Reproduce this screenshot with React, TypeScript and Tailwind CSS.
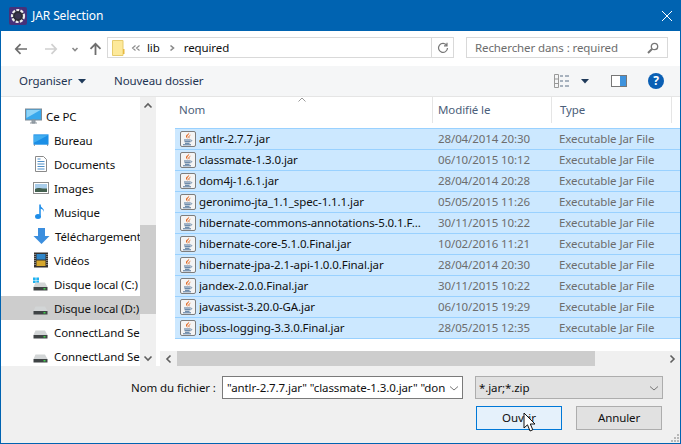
import React from "react";

const Java = () => (
  <svg width="18" height="18" viewBox="0 0 18 18" className="shrink-0">
    <rect x="1.500" y="1.500" width="15" height="15" rx="1.500" fill="#f4f4f4" stroke="#7d7d7d" />
    <path d="M10 2.500c1 2-2.600 3-1.600 5.200.2.500.5.8.8 1.100C7.400 8 6.500 6.800 7.200 5.500 7.800 4.500 9.800 4 10 2.500z" fill="#e0651f" />
    <path d="M11.300 5.200c-1.200.8-2 1.500-1.100 3" fill="none" stroke="#e0651f" strokeWidth="1" />
    <path d="M5 10h6.500M5.500 11.700h5.500M6 13.300h4.500M4 14.800h8" stroke="#4f7399" strokeWidth="1" fill="none" />
    <path d="M11.500 10c1.500-.3 1.800 1.400-.3 1.800" stroke="#4f7399" strokeWidth=".8" fill="none" />
  </svg>
);

const Drive = ({ win }: { win?: boolean }) => (
  <svg width="16" height="16" viewBox="0 0 16 16" className="shrink-0">
    {win && <path d="M0 1.500h2.700v2.500H0zM3.300 1.500H6v2.500H3.300zM0 4.500h2.700V7H0zM3.300 4.500H6V7H3.300z" fill="#1fb2f0" />}
    <path d="M2.500 6.500h9.500l2.500 4.500H0.500z" fill="#d2d5d6" />
    <rect x="0.500" y="11" width="14" height="3.500" fill="#3f4345" />
    <rect x="10.500" y="12" width="2" height="1.500" fill="#3fd04a" />
  </svg>
);

const Pc = () => (
  <svg width="17" height="16" viewBox="0 0 17 16" className="shrink-0">
    <rect x="0.500" y="1" width="16" height="11" fill="#38a8ec" stroke="#7f8a94" />
    <path d="M1.500 2h14l-14 8z" fill="#8fd4f7" />
    <path d="M5 15h7M7 12h3v3H7z" fill="#9aa4ad" stroke="#8a949c" />
  </svg>
);

const Desk = () => (
  <svg width="16" height="16" viewBox="0 0 17 16" className="shrink-0">
    <rect x="0.500" y="2" width="16" height="11" fill="#1c8fe6" />
    <path d="M1 3h15l-15 8z" fill="#42aef0" />
    <path d="M1 13.500h1M15 13.500h1" stroke="#555" />
  </svg>
);

const Doc = () => (
  <svg width="16" height="16" viewBox="0 0 16 16" className="shrink-0">
    <path d="M2.500 .5h8l3 3v12h-11z" fill="#fff" stroke="#8a8a8a" />
    <path d="M4.500 3h3M4.500 5.500h7M4.500 8h7M4.500 10.500h7M4.500 13h7" stroke="#4f8fc8" />
  </svg>
);

const Pic = () => (
  <svg width="16" height="16" viewBox="0 0 16 16" className="shrink-0">
    <rect x=".5" y="2.500" width="15" height="11" fill="#fff" stroke="#8e8e8e" />
    <rect x="2" y="4" width="12" height="8" fill="#a9cdea" />
    <path d="M2 9c3-2 6 0 12-.500V12H2z" fill="#43604f" />
  </svg>
);

const Music = () => (
  <svg width="16" height="16" viewBox="0 0 16 16" className="shrink-0">
    <path d="M7 .5v11" stroke="#1e8de8" strokeWidth="1.500" />
    <ellipse cx="5" cy="12.500" rx="3" ry="2.500" fill="#1e8de8" />
    <path d="M7 .5c.500 3 4.500 3.500 4 7.500-.5-2.500-2-3-4-3.500z" fill="#1e8de8" />
  </svg>
);

const Down = () => (
  <svg width="17" height="16" viewBox="0 0 17 16" className="shrink-0">
    <path d="M5 0h7v8h4.500l-8 8-8-8H5z" fill="#3b8ede" />
  </svg>
);

const Video = () => (
  <svg width="16" height="16" viewBox="0 0 16 16" className="shrink-0">
    <rect x="1" y="0.500" width="14" height="15" fill="#35312e" />
    <rect x="3.500" y="2" width="9" height="5.500" fill="#2f86c9" />
    <rect x="3.500" y="8.500" width="9" height="5.500" fill="#d6a72c" />
    <path d="M2 2v12M14 2v12" stroke="#ccc" strokeDasharray="1 1" />
  </svg>
);

const Side = ({ icon, label, active, sub }: { icon: React.ReactNode; label: string; active?: boolean; sub?: boolean }) => (
  <div className={`flex h-6 shrink-0 items-center whitespace-nowrap text-[#101010] ${sub ? "pl-[24px] gap-[4px]" : "pl-[32px] gap-[5px]"} ${active ? "bg-[#cdcdcd]" : ""}`}>
    {icon}
    <span className="relative top-[1px]">{label}</span>
  </div>
);

const Row = ({ name, date }: { name: string; date: string }) => (
  <div className="flex h-[21px] shrink-0 items-center border-b border-[#99d1ff] bg-[#cce8ff] pl-[4px] leading-normal text-[#101010] first:h-[22px] first:border-t">
    <Java />
    <span className="ml-[2px] w-[239px] truncate">{name}</span>
    <span className="w-[121px] text-[#6d6d6d]">{date}</span>
    <span className="text-[#6d6d6d]">Executable Jar File</span>
  </div>
);

const files: [string, string][] = [
  ["antlr-2.7.7.jar", "28/04/2014 20:30"],
  ["classmate-1.3.0.jar", "06/10/2015 10:12"],
  ["dom4j-1.6.1.jar", "28/04/2014 20:28"],
  ["geronimo-jta_1.1_spec-1.1.1.jar", "05/05/2015 11:26"],
  ["hibernate-commons-annotations-5.0.1.F...", "30/11/2015 10:22"],
  ["hibernate-core-5.1.0.Final.jar", "10/02/2016 11:21"],
  ["hibernate-jpa-2.1-api-1.0.0.Final.jar", "28/04/2014 20:30"],
  ["jandex-2.0.0.Final.jar", "30/11/2015 10:22"],
  ["javassist-3.20.0-GA.jar", "06/10/2015 19:29"],
  ["jboss-logging-3.3.0.Final.jar", "28/05/2015 12:35"],
];

const Chev = ({ d, c = "#5f5f5f", w = 1.600, cls = "" }: { d: string; c?: string; w?: number; cls?: string }) => (
  <svg width="10" height="10" viewBox="0 0 10 10" className={`shrink-0 ${cls}`}>
    <path d={d} fill="none" stroke={c} strokeWidth={w} />
  </svg>
);

const Tri = () => (
  <svg width="8" height="5" viewBox="0 0 8 5" className="shrink-0"><path d="M0 0h8L4 4.500z" fill="#1f3a5a" /></svg>
);

export default function App() {
  return (
    <div
      className="relative flex h-[444px] w-[681px] flex-col overflow-hidden border-x border-b border-[#0063b1] bg-white text-[11.500px] leading-normal tracking-[-0.1px]"
      style={{ fontFamily: '"Noto Sans", "Open Sans", sans-serif' }}
    >
      {/* title */}
      <div className="flex h-[31px] shrink-0 items-center bg-[#0063b1] pl-[8px] pr-[6px] text-white">
        <svg width="18" height="18" viewBox="0 0 18 18" className="shrink-0">
          <rect width="18" height="18" rx="2" fill="#46327a" />
          <circle cx="9" cy="9" r="6" fill="#2b2b35" stroke="#ececec" strokeWidth="2.200" strokeDasharray="3 1.300" />
          <circle cx="9" cy="9" r="3" fill="#3a3550" />
        </svg>
        <span className="ml-[5px] text-[12px]">JAR Selection</span>
        <svg width="12" height="12" viewBox="0 0 12 12" className="ml-auto mr-[1px]">
          <path d="M1 1l10 10M11 1L1 11" stroke="#fff" strokeWidth="1" />
        </svg>
      </div>

      {/* nav */}
      <div className="flex h-[35px] shrink-0 items-center pl-[13px] pr-[12px]">
        <svg width="14" height="12" viewBox="0 0 14 12"><path d="M13 6H2M6.500 1.200L1.800 6l4.700 4.800" fill="none" stroke="#6e6e6e" strokeWidth="1.700" /></svg>
        <svg width="14" height="12" viewBox="0 0 14 12" className="ml-[16px]"><path d="M1 6h11M7.500 1.200L12.200 6l-4.700 4.800" fill="none" stroke="#d0d0d0" strokeWidth="1.700" /></svg>
        <Chev d="M2.500 4L5 6.500 7.500 4" c="#8a8a8a" cls="ml-[12px]" />
        <svg width="13" height="14" viewBox="0 0 13 14" className="ml-[9px]"><path d="M6.500 13V2M1.500 6.800L6.500 1.800l5 5" fill="none" stroke="#6e6e6e" strokeWidth="1.800" /></svg>
        <div className="mb-[2px] ml-[5px] flex h-[21px] w-[347px] items-center border border-[#d9d9d9] pl-[4px]">
          <svg width="13" height="16" viewBox="0 0 13 16" className="shrink-0">
            <path d="M.5.500h10.500v15H.5z" fill="#fde99a" stroke="#e6cb6c" />
            <path d="M11 9h1.500v5H11z" fill="#e8b93f" />
          </svg>
          <Chev d="M4.500 2.500L1.500 5l3 2.500M8.500 2.500L5.500 5l3 2.500" c="#8a8a8a" w={1.100} cls="ml-[6px]" />
          <span className="ml-[6px] text-[#101010]">lib</span>
          <Chev d="M3.500 2.500L6.500 5l-3 2.500" c="#8a8a8a" cls="ml-[7px]" />
          <span className="ml-[7px] text-[#101010]">required</span>
          <div className="ml-auto flex h-full w-[22px] items-center justify-center border-l border-[#d9d9d9]">
            <svg width="12" height="12" viewBox="0 0 12 12"><path d="M9.800 3.500A4.500 4.500 0 1 0 10.500 6M10 .8v3H7" fill="none" stroke="#777" strokeWidth="1.200" /></svg>
          </div>
        </div>
        <div className="mb-[2px] ml-[12px] flex h-[21px] flex-1 items-center border border-[#d9d9d9] pl-[8px] pr-[8px] text-[#6d6d6d]">
          <span>Rechercher dans : required</span>
          <svg width="12" height="12" viewBox="0 0 12 12" className="ml-auto"><circle cx="7.500" cy="4.500" r="3.200" fill="none" stroke="#777" strokeWidth="1.300" /><path d="M5 7L1 11" stroke="#777" strokeWidth="2" /></svg>
        </div>
      </div>

      {/* toolbar */}
      <div className="flex h-[31px] shrink-0 items-center border-b border-[#e5e5e5] bg-[#f5f6f7] pl-[18px] pr-[16px] text-[#1f3553]">
        <span>Organiser</span>
        <span className="ml-[6px]"><Tri /></span>
        <span className="ml-[28px]">Nouveau dossier</span>
        <svg width="16" height="14" viewBox="0 0 16 14" className="ml-auto">
          <path d="M.5 .5h4v13h-4zM.5 5h4M.5 9.500h4" fill="none" stroke="#999" />
          <path d="M6 2h3M11 2h4M6 7h3M11 7h4M6 12h3M11 12h4" stroke="#5b6f85" />
        </svg>
        <span className="ml-[11px]"><Tri /></span>
        <svg width="16" height="12" viewBox="0 0 16 12" className="ml-[22px]">
          <rect x=".5" y=".5" width="15" height="11" fill="#fff" stroke="#777" />
          <rect x="9" y="1" width="6" height="10" fill="#3f93dd" />
        </svg>
        <div className="ml-[21px] flex h-4 w-4 items-center justify-center rounded-full bg-[#0a5fb4] text-[12px] font-bold text-white">?</div>
      </div>

      {/* main */}
      <div className="flex min-h-0 flex-1">
        <div className="flex w-[155px] shrink-0">
          <div className="flex min-w-0 flex-1 flex-col overflow-hidden pt-[7px]">
            <Side sub icon={<Pc />} label="Ce PC" />
            <Side icon={<Desk />} label="Bureau" />
            <Side icon={<Doc />} label="Documents" />
            <Side icon={<Pic />} label="Images" />
            <Side icon={<Music />} label="Musique" />
            <Side icon={<Down />} label="Téléchargement" />
            <Side icon={<Video />} label="Vidéos" />
            <Side icon={<Drive win />} label="Disque local (C:)" />
            <Side active icon={<Drive />} label="Disque local (D:)" />
            <Side icon={<Drive />} label="ConnectLand Se" />
            <Side icon={<Drive />} label="ConnectLand Se" />
          </div>
          <div className="flex w-[16px] shrink-0 flex-col bg-[#f0f0f0]">
            <div className="flex h-[17px] shrink-0 items-center justify-center"><Chev d="M1.500 6.500L5 3l3.500 3.500" /></div>
            <div className="h-[111px] shrink-0" />
            <div className="h-[89px] shrink-0 bg-[#cdcdcd]" />
            <div className="flex flex-1 items-end justify-center pb-[3px]"><Chev d="M1.500 3.500L5 7l3.500-3.500" /></div>
          </div>
        </div>

        <div className="flex min-w-0 flex-1 flex-col pl-[4px]">
          <div className="relative flex h-[26px] shrink-0 text-[#4c607a]">
            <div className="flex w-[273px] items-center border-r border-[#e5e5e5] pl-[19px]">Nom</div>
            <div className="flex w-[119px] items-center border-r border-[#e5e5e5] pl-[5px]">Modifié le</div>
            <div className="flex w-[120px] items-center border-r border-[#e5e5e5] pl-[8px]">Type</div>
            <svg width="8" height="5" viewBox="0 0 8 5" className="absolute left-[138px] top-0"><path d="M.5 4.500L4 1l3.500 3.500" fill="none" stroke="#999" /></svg>
          </div>
          <div className="flex min-h-0 flex-1 flex-col pl-[15px] pt-[5px]">
            {files.map(([n, d]) => <Row key={n} name={n} date={d} />)}
          </div>
          <div className="flex h-[15px] shrink-0 items-center bg-[#f0f0f0]">
            <div className="flex w-[17px] shrink-0 justify-center"><Chev d="M6.500 1.500L3 5l3.500 3.500" /></div>
            <div className="h-full w-[418px] bg-[#cdcdcd]" />
            <div className="ml-auto flex w-[17px] shrink-0 justify-center"><Chev d="M3.500 1.500L7 5 3.500 8.500" /></div>
          </div>
        </div>
      </div>

      {/* bottom */}
      <div className="relative flex h-[77px] shrink-0 flex-col bg-[#f0f0f0] pl-[130px] pr-[17px] pt-[10px]">
        <div className="flex items-center text-[#101010]">
          <span className="w-[91px] whitespace-nowrap">Nom du fichier :</span>
          <div className="flex h-[23px] w-[241px] items-center overflow-hidden border border-[#7a7a7a] bg-white pl-[4px] pr-[3px]">
            <span className="min-w-0 flex-1 overflow-hidden whitespace-nowrap">"antlr-2.7.7.jar" "classmate-1.3.0.jar" "don</span>
            <Chev d="M1 3.500L5 7l4-3.500" c="#777" w={1} />
          </div>
          <div className="ml-[12px] flex h-[23px] flex-1 items-center border border-[#adadad] bg-[#e1e1e1] pl-[3px] pr-[3px]">
            <span>*.jar;*.zip</span>
            <Chev d="M1 3.500L5 7l4-3.500" c="#777" w={1} cls="ml-auto" />
          </div>
        </div>
        <div className="mt-[7px] flex justify-end gap-[14px] pr-[1px] text-[#101010]">
          <div className="flex h-[24px] w-[86px] items-center justify-center border border-[#0078d7] bg-[#e5f1fb]">Ouvrir</div>
          <div className="flex h-[24px] w-[86px] items-center justify-center border border-[#adadad] bg-[#e1e1e1]">Annuler</div>
        </div>
        <svg width="10" height="10" viewBox="0 0 10 10" className="absolute bottom-0 right-0">
          <path d="M7 1h2v2H7zM4 4h2v2H4zM7 4h2v2H7zM1 7h2v2H1zM4 7h2v2H4zM7 7h2v2H7z" fill="#b8b8b8" />
        </svg>
        <svg width="14" height="22" viewBox="0 0 14 22" className="absolute left-[522px] top-[46px]">
          <path d="M1 1v15l3.500-3.200L7 19l2.800-1.200L7.300 12H12z" fill="#fff" stroke="#111" strokeWidth="1" />
        </svg>
      </div>
    </div>
  );
}
